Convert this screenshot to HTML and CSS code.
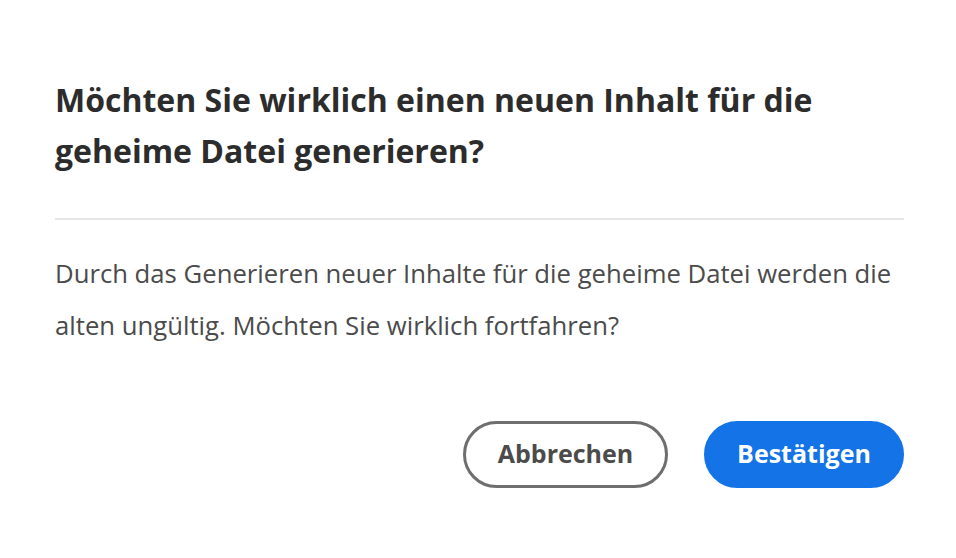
FILE: index.html
```html
<!DOCTYPE html>
<html lang="de">
<head>
<meta charset="utf-8">
<link rel="stylesheet" href="styles.css">
<title>Dialog</title>
</head>
<body>
<section class="dialog" role="alertdialog">
  <h2 class="dialog-title">Möchten Sie wirklich einen neuen Inhalt für die geheime Datei generieren?</h2>
  <hr class="dialog-divider">
  <p class="dialog-content">Durch das Generieren neuer Inhalte für die geheime Datei werden die alten ungültig. Möchten Sie wirklich fortfahren?</p>
  <div class="dialog-buttons">
    <button class="btn btn-secondary" type="button">Abbrechen</button>
    <button class="btn btn-accent" type="button">Bestätigen</button>
  </div>
</section>
</body>
</html>
```

FILE: styles.css
```css
html, body {
  margin: 0;
  padding: 0;
  background: #ffffff;
}

body {
  font-family: "Open Sans", "Noto Sans", sans-serif;
  width: 956px;
  height: 558px;
  overflow: hidden;
}

.dialog {
  box-sizing: border-box;
  width: 956px;
  padding: 74px 52px 0 55px;
  display: flex;
  flex-direction: column;
}

.dialog-title {
  margin: 0;
  font-size: 32px;
  line-height: 51px;
  font-weight: 700;
  color: #2c2c2c;
  max-width: 840px;
}

.dialog-divider {
  margin: 42px 0 0 0;
  border: 0;
  height: 2px;
  background: #e6e6e6;
}

.dialog-content {
  margin: 28px 0 0 0;
  font-size: 25.7px;
  line-height: 52px;
  font-weight: 400;
  color: #4b4b4b;
}

.dialog-buttons {
  margin-top: 69px;
  display: flex;
  justify-content: flex-end;
  gap: 36px;
}

.btn {
  box-sizing: border-box;
  height: 67px;
  width: 205px;
  padding: 0 0 4px 0;
  border-radius: 34px;
  font-family: inherit;
  font-size: 25px;
  font-weight: 700;
  cursor: pointer;
}

.btn-secondary {
  background: #ffffff;
  border: 3px solid #6e6e6e;
  color: #4b4b4b;
}

.btn-accent {
  background: #1473e6;
  border: 3px solid #1473e6;
  color: #ffffff;
  width: 200px;
}
```
